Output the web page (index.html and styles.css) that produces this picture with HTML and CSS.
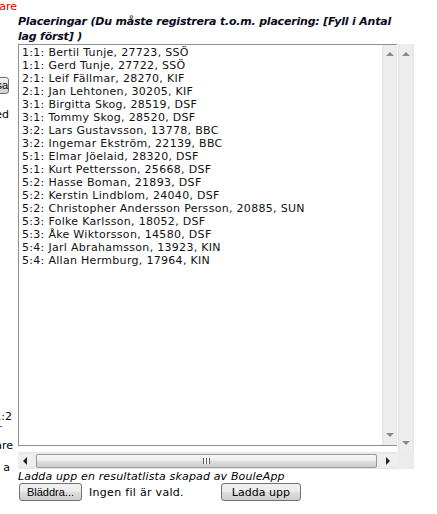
FILE: index.html
```html
<!DOCTYPE html>
<html lang="sv">
<head>
<meta charset="utf-8">
<title>Placeringar</title>
<link rel="stylesheet" href="styles.css">
</head>
<body>
<div class="page">
  <div class="side">
    <div class="frag red f1"><span>Spelare</span></div>
    <div class="frag f2"><span class="sidebtn">Rensa</span></div>
    <div class="frag f3"><span>Seeded</span></div>
    <div class="frag f4"><span>1:2</span></div>
    <div class="frag f5"><span class="blue">r</span></div>
    <div class="frag f6"><span>Spelare</span></div>
    <div class="frag f7"><span>a</span></div>
  </div>
  <div class="main">
    <h3 class="title">Placeringar (Du måste registrera t.o.m. placering: [Fyll i Antal<br>lag först] )</h3>
    <div class="scrollbox">
      <div class="viewport">
        <div class="textarea">
          <div class="lines">1:1: Bertil Tunje, 27723, SSÖ
1:1: Gerd Tunje, 27722, SSÖ
2:1: Leif Fällmar, 28270, KIF
2:1: Jan Lehtonen, 30205, KIF
3:1: Birgitta Skog, 28519, DSF
3:1: Tommy Skog, 28520, DSF
3:2: Lars Gustavsson, 13778, BBC
3:2: Ingemar Ekström, 22139, BBC
5:1: Elmar Jöelaid, 28320, DSF
5:1: Kurt Pettersson, 25668, DSF
5:2: Hasse Boman, 21893, DSF
5:2: Kerstin Lindblom, 24040, DSF
5:2: Christopher Andersson Persson, 20885, SUN
5:3: Folke Karlsson, 18052, DSF
5:3: Åke Wiktorsson, 14580, DSF
5:4: Jarl Abrahamsson, 13923, KIN
5:4: Allan Hermburg, 17964, KIN</div>
          <div class="vbar inner">
            <span class="arr up dim"></span>
            <span class="arr down dim"></span>
          </div>
        </div>
      </div>
      <div class="vbar outer">
        <span class="arr up dim"></span>
        <span class="arr down dim"></span>
      </div>
      <div class="hbar">
        <span class="harr left"></span>
        <div class="thumb"><span class="grip"></span></div>
        <span class="harr right"></span>
      </div>
      <div class="corner"></div>
    </div>
    <p class="hint">Ladda upp en resultatlista skapad av BouleApp</p>
    <div class="filerow">
      <button class="btn browse">Bläddra...</button>
      <span class="nofile">Ingen fil är vald.</span>
      <button class="btn upload">Ladda upp</button>
    </div>
  </div>
</div>
</body>
</html>
```

FILE: styles.css
```css
html, body {
  margin: 0;
  padding: 0;
  background: #fff;
}
body {
  font-family: "DejaVu Sans", Verdana, sans-serif;
  font-size: 11px;
  color: #000;
  overflow: hidden;
}
.page {
  display: flex;
  width: 437px;
  height: 514px;
}
.side {
  width: 18px;
  flex: none;
  display: flex;
  flex-direction: column;
  overflow: hidden;
}
.frag {
  display: flex;
  justify-content: flex-end;
  white-space: nowrap;
  line-height: 13px;
  height: 13px;
  overflow: hidden;
}
.red { color: #e00000; }
.blue { color: #1a3fa8; }
.f1 { padding-right: 1px; }
.f2 {
  margin-top: 64px;
  height: 17px;
  padding-right: 9px;
  align-items: stretch;
}
.sidebtn {
  display: inline-flex;
  align-items: center;
  padding: 0 0 0 6px;
  border: 1px solid #707070;
  border-radius: 3px;
  background: linear-gradient(#f2f2f2, #ebebeb 50%, #dddddd 50%, #cfcfcf);
  font-family: "Liberation Sans", Arial, sans-serif;
  font-size: 11px;
  color: #000;
}
.f3 { margin-top: 14px; padding-right: 9px; }
.f4 { margin-top: 289px; padding-right: 6px; }
.f5 { margin-top: -1px; height: 10px; padding-right: 16px; }
.f6 { margin-top: 7px; padding-right: 5px; }
.f7 { margin-top: 9px; padding-right: 8px; }

.main {
  flex: none;
  width: 419px;
  display: flex;
  flex-direction: column;
  padding-top: 14px;
}
.title {
  margin: 0;
  font-size: 11px;
  font-weight: bold;
  font-style: italic;
  line-height: 15px;
  color: #0a0a1e;
  white-space: nowrap;
  letter-spacing: -0.2px;
}
.scrollbox {
  display: grid;
  grid-template-columns: 379px 17px;
  grid-template-rows: 408px 17px;
  width: 396px;
}
.viewport {
  overflow: hidden;
}
.textarea {
  width: 379px;
  height: 400px;
  border: 1px solid #8f8f8f;
  display: flex;
  background: #fff;
}
.lines {
  flex: 1;
  padding: 1px 3px;
  white-space: pre;
  line-height: 13px;
  letter-spacing: 0.3px;
  color: #111;
  overflow: hidden;
}
.vbar {
  background: linear-gradient(90deg, #e2e2e2, #eeeeee 15%, #ededed 85%, #e4e4e4);
  display: flex;
  flex-direction: column;
  justify-content: space-between;
  align-items: center;
}
.vbar.inner {
  width: 16px;
  flex: none;
  padding: 7px 0 8px;
  box-sizing: border-box;
}
.vbar.outer {
  border-left: 1px solid #f8f8f8;
  padding: 8px 0 7px;
}
.arr {
  width: 0;
  height: 0;
  border-left: 4px solid transparent;
  border-right: 4px solid transparent;
}
.arr.up { border-bottom: 4px solid #8a8a8a; }
.arr.down { border-top: 4px solid #8a8a8a; }
.hbar {
  background: linear-gradient(#e6e6e6, #efefef 20%, #eeeeee 80%, #e5e5e5);
  display: flex;
  align-items: center;
}
.harr {
  width: 0;
  height: 0;
  border-top: 4px solid transparent;
  border-bottom: 4px solid transparent;
  flex: none;
}
.harr.left {
  border-right: 4px solid #222;
  margin: 0 9px 0 5px;
}
.harr.right {
  border-left: 4px solid #222;
  margin: 0 0 0 9px;
}
.thumb {
  flex: none;
  width: 339px;
  height: 12px;
  border: 1px solid #989898;
  border-radius: 2px;
  background: linear-gradient(#f7f7f7, #ececec 45%, #dcdcdc 55%, #cfcfcf);
  display: flex;
  align-items: center;
  justify-content: center;
}
.grip {
  width: 7px;
  height: 6px;
  background: repeating-linear-gradient(90deg, #5a5a5a 0 1px, #f4f4f4 1px 2px, #ffffff 2px 3px);
}
.corner {
  background: #ececec;
}
.hint {
  margin: 0;
  font-style: italic;
  line-height: 13px;
  letter-spacing: 0.15px;
  padding-top: 1px;
}
.filerow {
  display: flex;
  align-items: center;
  padding-left: 1px;
}
.btn {
  height: 18px;
  box-sizing: border-box;
  border: 1px solid #707070;
  border-radius: 3px;
  background: linear-gradient(#f2f2f2, #ebebeb 48%, #dddddd 52%, #cfcfcf);
  color: #000;
  padding: 0;
  margin: 0;
}
.browse {
  width: 63px;
  font-family: "Liberation Sans", Arial, sans-serif;
  font-size: 11px;
}
.nofile {
  margin-left: 7px;
  letter-spacing: 0.3px;
}
.upload {
  margin-left: 37px;
  width: 80px;
  font-family: "DejaVu Sans", Verdana, sans-serif;
  font-size: 11px;
}
```
